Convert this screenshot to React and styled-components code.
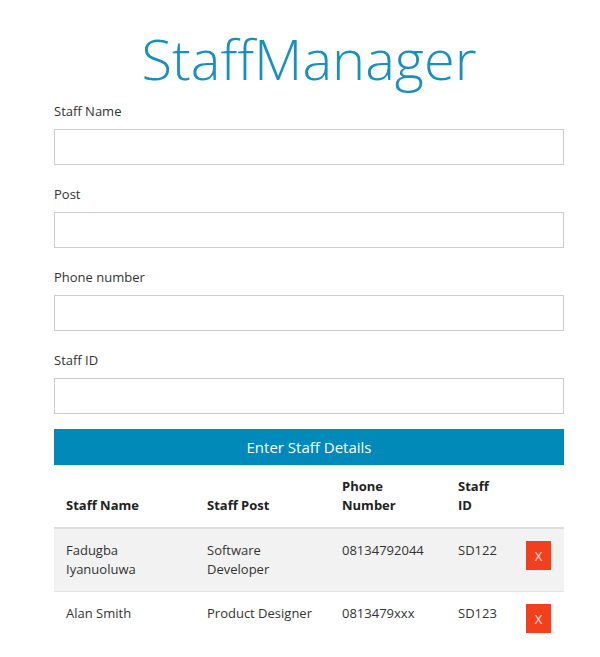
import React from 'react';
import styled, { createGlobalStyle } from 'styled-components';

const GlobalStyle = createGlobalStyle`
    * { box-sizing: border-box; }
    body {
        margin: 0;
        background: #FFFFFF;
        font-family: "Open Sans", "Noto Sans", sans-serif;
        color: #333333;
    }
`;

// components
const Page = styled.div`
    width: 510px;
    margin-left: 54px;
    padding-top: 22px;
`;

const Title = styled.h1`
    margin: 0 0 8px;
    text-align: center;
    font-size: 56px;
    font-weight: 300;
    line-height: 72px;
    color: #1790BF;
`;

const Form = styled.form`
    display: flex;
    flex-direction: column;
`;

const Field = styled.div`
    display: flex;
    flex-direction: column;
    margin-bottom: 20px;
    &:last-of-type {
        margin-bottom: 15px;
    }
    label {
        font-size: 13px;
        line-height: 18px;
        margin-bottom: 9px;
        color: #333333;
    }
`;

const Input = styled.input`
    height: 36px;
    width: 100%;
    border: 1px solid #CCCCCC;
    background: #FFFFFF;
    padding: 0 10px;
    font: inherit;
    font-size: 13px;
    outline: none;
`;

const SubmitButton = styled.button`
    height: 36px;
    width: 100%;
    border: none;
    background-color: #0089B9;
    color: #FFFFFF;
    font-family: inherit;
    font-size: 15px;
    cursor: pointer;
`;

const Table = styled.table`
    width: 100%;
    border-collapse: collapse;
    font-size: 13px;
    line-height: 19px;
    th, td {
        padding: 12px;
        text-align: left;
    }
    th {
        vertical-align: bottom;
        font-weight: 700;
        color: #222222;
        border-bottom: 2px solid #DDDDDD;
    }
    td {
        vertical-align: top;
        border-bottom: 1px solid #E4E4E4;
    }
    tbody tr:nth-child(odd) {
        background-color: #F2F2F2;
    }
    tbody tr:last-child td {
        border-bottom: none;
    }
`;

const Col = styled.col`
    width: ${(p) => p.$w}px;
`;

const DeleteButton = styled.button`
    display: block;
    width: 25px;
    height: 29px;
    border: none;
    padding: 0;
    background-color: #F2401F;
    color: #FDE3DD;
    font-family: inherit;
    font-size: 13px;
    cursor: pointer;
`;

const staff = [
    { name: 'Fadugba Iyanuoluwa', post: 'Software Developer', phone: '08134792044', id: 'SD122' },
    { name: 'Alan Smith', post: 'Product Designer', phone: '0813479xxx', id: 'SD123' },
];

const fields = ['Staff Name', 'Post', 'Phone number', 'Staff ID'];

function App() {
    return (
        <>
            <GlobalStyle />
            <Page>
                <Title>StaffManager</Title>
                <Form onSubmit={(e) => e.preventDefault()}>
                    {fields.map((f) => (
                        <Field key={f}>
                            <label>{f}</label>
                            <Input type="text" />
                        </Field>
                    ))}
                    <SubmitButton type="submit">Enter Staff Details</SubmitButton>
                </Form>
                <Table>
                    <colgroup>
                        <Col $w={141} />
                        <Col $w={135} />
                        <Col $w={116} />
                        <Col $w={68} />
                        <Col $w={50} />
                    </colgroup>
                    <thead>
                        <tr>
                            <th>Staff Name</th>
                            <th>Staff Post</th>
                            <th>Phone Number</th>
                            <th>Staff ID</th>
                            <th></th>
                        </tr>
                    </thead>
                    <tbody>
                        {staff.map((s) => (
                            <tr key={s.id}>
                                <td>{s.name}</td>
                                <td>{s.post}</td>
                                <td>{s.phone}</td>
                                <td>{s.id}</td>
                                <td><DeleteButton>X</DeleteButton></td>
                            </tr>
                        ))}
                    </tbody>
                </Table>
            </Page>
        </>
    );
}

export default App;
